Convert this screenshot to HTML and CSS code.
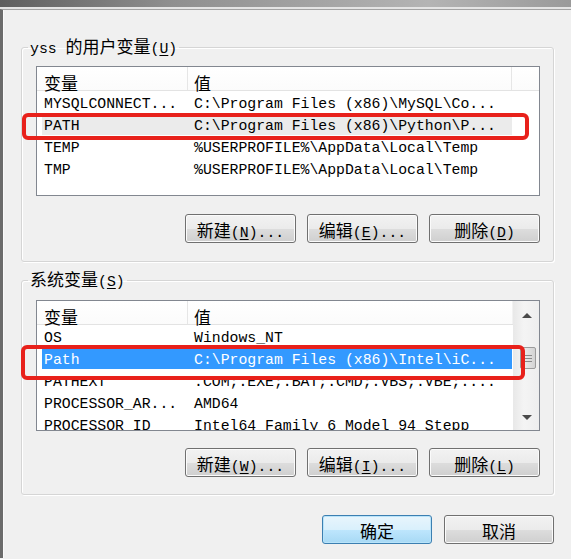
FILE: index.html
```html
<!DOCTYPE html>
<html lang="zh-CN">
<head>
  <meta charset="UTF-8">
  <title>环境变量</title>
  <link rel="stylesheet" href="styles.css">
</head>
<body>
  <div class="titlebar"></div>
  <div class="client">
    <fieldset class="group group-user">
      <legend>yss <span class="zh">的用户变量</span>(<u>U</u>)</legend>
      <div class="list list-user">
        <div class="list-main">
          <div class="list-head">
            <div class="col col-name"><span class="zh">变量</span></div>
            <div class="col col-value"><span class="zh">值</span></div>
            <div class="col col-rest"></div>
          </div>
          <div class="row"><span class="name">MYSQLCONNECT...</span><span class="value">C:\Program Files (x86)\MySQL\Co...</span></div>
          <div class="row row-inactive"><span class="name">PATH</span><span class="value">C:\Program Files (x86)\Python\P...</span></div>
          <div class="row"><span class="name">TEMP</span><span class="value">%USERPROFILE%\AppData\Local\Temp</span></div>
          <div class="row"><span class="name">TMP</span><span class="value">%USERPROFILE%\AppData\Local\Temp</span></div>
        </div>
      </div>
      <div class="btn-row">
        <button class="btn"><span class="zh">新建</span>(<u>N</u>)...</button>
        <button class="btn"><span class="zh">编辑</span>(<u>E</u>)...</button>
        <button class="btn"><span class="zh">删除</span>(<u>D</u>)</button>
      </div>
    </fieldset>

    <fieldset class="group group-sys">
      <legend><span class="zh">系统变量</span>(<u>S</u>)</legend>
      <div class="list list-sys">
        <div class="list-main">
          <div class="list-head">
            <div class="col col-name"><span class="zh">变量</span></div>
            <div class="col col-value"><span class="zh">值</span></div>
          </div>
          <div class="row"><span class="name">OS</span><span class="value">Windows_NT</span></div>
          <div class="row row-selected"><span class="name">Path</span><span class="value">C:\Program Files (x86)\Intel\iC...</span></div>
          <div class="row"><span class="name">PATHEXT</span><span class="value">.COM;.EXE;.BAT;.CMD;.VBS;.VBE;....</span></div>
          <div class="row"><span class="name">PROCESSOR_AR...</span><span class="value">AMD64</span></div>
          <div class="row"><span class="name">PROCESSOR_ID</span><span class="value">Intel64 Family 6 Model 94 Stepp</span></div>
        </div>
        <div class="scrollbar">
          <div class="arrow arrow-up"></div>
          <div class="thumb"></div>
          <div class="arrow arrow-down"></div>
        </div>
      </div>
      <div class="btn-row">
        <button class="btn"><span class="zh">新建</span>(<u>W</u>)...</button>
        <button class="btn"><span class="zh">编辑</span>(<u>I</u>)...</button>
        <button class="btn"><span class="zh">删除</span>(<u>L</u>)</button>
      </div>
    </fieldset>

    <div class="dialog-buttons">
      <button class="btn btn-wide btn-default"><span class="zh">确定</span></button>
      <button class="btn btn-wide"><span class="zh">取消</span></button>
    </div>
  </div>

  <!-- red annotation boxes -->
  <div class="mark mark-user"></div>
  <div class="mark mark-sys"></div>
</body>
</html>
```

FILE: styles.css
```css
body {
  margin: 0;
  width: 571px;
  height: 559px;
  overflow: hidden;
  background-color: #f0f0f0;
  font-family: "Liberation Mono", monospace;
  font-size: 14.8px;
  color: #000;
  position: relative;
}
.zh {
  font-family: "Noto Sans CJK SC", sans-serif;
  font-size: 17px;
  line-height: 1;
}
u {
  text-decoration-thickness: 1px;
  text-underline-offset: 2px;
}
.titlebar {
  height: 7px;
  background: linear-gradient(to right, #5e5e5e, #8f8f8f 30%, #b4b4b4 75%, #9a9a9a);
  border-bottom: 2px solid #e4e4e4;
}
.client {
  height: 549px;
  box-sizing: border-box;
  border-top: 1px solid #a3a3a3;
  border-left: 3px solid #6b6b6b;
  box-shadow: inset 1px 0 #fafafa;
  padding-top: 27px;
}

/* group boxes */
.group {
  margin: 0 17px 0 18px;
  padding: 0 13px 18px 14px;
  border: 1px solid #d5d5d5;
  border-radius: 3px;
  box-shadow: inset 1px 1px 0 #fff, 1px 1px 0 #fff;
  min-width: 0;
}
.group-sys {
  margin-top: 8px;
  padding-bottom: 17px;
}
.group legend {
  margin-left: -8px;
  padding: 0 2px;
  line-height: 20px;
  height: 20px;
}
.list {
  display: flex;
  border: 1px solid #828790;
  background-color: #fff;
  overflow: hidden;
}
.list-user {
  margin-top: 9px;
  height: 128px;
}
.list-sys {
  margin-top: 10px;
  height: 129px;
}
.list-main {
  flex: 1;
  min-width: 0;
}
.list-head {
  display: flex;
  height: 23px;
  border-bottom: 1px solid #e3e3e3;
  background: linear-gradient(#ffffff, #fbfbfb);
}
.col {
  box-sizing: border-box;
  height: 23px;
  padding-top: 7px;
  line-height: 16px;
}
.col-name {
  width: 151px;
  padding-left: 7px;
  border-right: 1px solid #e6e6e6;
}
.col-value {
  width: 324px;
  padding-left: 6px;
  border-right: 1px solid #e6e6e6;
}
.list-sys .col-value {
  width: 325px;
  border-right: 1px solid #f2f2f2;
}
.col-rest {
  flex: 1;
}
.row {
  display: flex;
  box-sizing: border-box;
  width: 470px;
  height: 22px;
  padding-top: 5px;
  line-height: 17px;
  margin-left: 5px;
  white-space: pre;
}
.row .name {
  width: 150px;
  padding-left: 2px;
  box-sizing: border-box;
  overflow: hidden;
}
.row .value {
  padding-left: 2px;
  overflow: hidden;
}
.row-inactive {
  background-color: #ebebeb;
}
.row-selected {
  background-color: #3399ff;
  color: #fff;
}

/* scrollbar */
.scrollbar {
  width: 26px;
  box-sizing: border-box;
  border-left: 1px solid #e9e9e9;
  background: linear-gradient(to right, #e9e9e9, #f4f4f4 40%, #eeeeee);
  display: flex;
  flex-direction: column;
  align-items: center;
}
.arrow {
  width: 0;
  height: 0;
  border-left: 5px solid transparent;
  border-right: 5px solid transparent;
}
.arrow-up {
  margin-top: 12px;
  border-bottom: 5px solid #4a4a4a;
}
.thumb {
  margin-top: 29px;
  margin-left: 2px;
  width: 16px;
  height: 22px;
  box-sizing: border-box;
  border: 1px solid #9b9b9b;
  border-radius: 2px;
  background:
    linear-gradient(#8a8a8a, #8a8a8a) center 7px / 8px 1px no-repeat,
    linear-gradient(#8a8a8a, #8a8a8a) center 10px / 8px 1px no-repeat,
    linear-gradient(#8a8a8a, #8a8a8a) center 13px / 8px 1px no-repeat,
    linear-gradient(to right, #f3f3f3, #e2e2e2 50%, #d3d3d3);
}
.arrow-down {
  margin-top: auto;
  margin-bottom: 10px;
  border-top: 5px solid #4a4a4a;
}

/* buttons */
.btn-row {
  display: flex;
  justify-content: flex-end;
  gap: 11px;
  margin-top: 18px;
}
.group-sys .btn-row {
  margin-top: 17px;
}
.btn {
  box-sizing: border-box;
  width: 111px;
  height: 29px;
  padding: 6px 0 0;
  border: 1px solid #707070;
  border-radius: 3px;
  background: linear-gradient(#f2f2f2 0%, #ebebeb 50%, #dddddd 51%, #cfcfcf 100%);
  box-shadow: inset 0 0 0 1px #fbfbfb;
  font-family: "Liberation Mono", monospace;
  font-size: 14.8px;
  line-height: 21px;
  color: #000;
}
.btn-wide {
  width: 110px;
}
.btn-default {
  border-color: #3c7fb1;
  background: linear-gradient(#e8f5fc 0%, #d9f0fc 50%, #bee6fd 51%, #a7d9f5 100%);
  box-shadow: inset 0 0 0 1px #b9e4fa;
}
.dialog-buttons {
  display: flex;
  justify-content: flex-end;
  gap: 12px;
  margin: 20px 17px 0 0;
}

/* red annotation boxes */
.mark {
  position: absolute;
  box-sizing: border-box;
  border: 4px solid #e8211b;
  border-radius: 6px;
}
.mark-user {
  left: 22px;
  top: 113px;
  width: 507px;
  height: 27px;
}
.mark-sys {
  left: 21px;
  top: 345px;
  width: 504px;
  height: 35px;
}
```
